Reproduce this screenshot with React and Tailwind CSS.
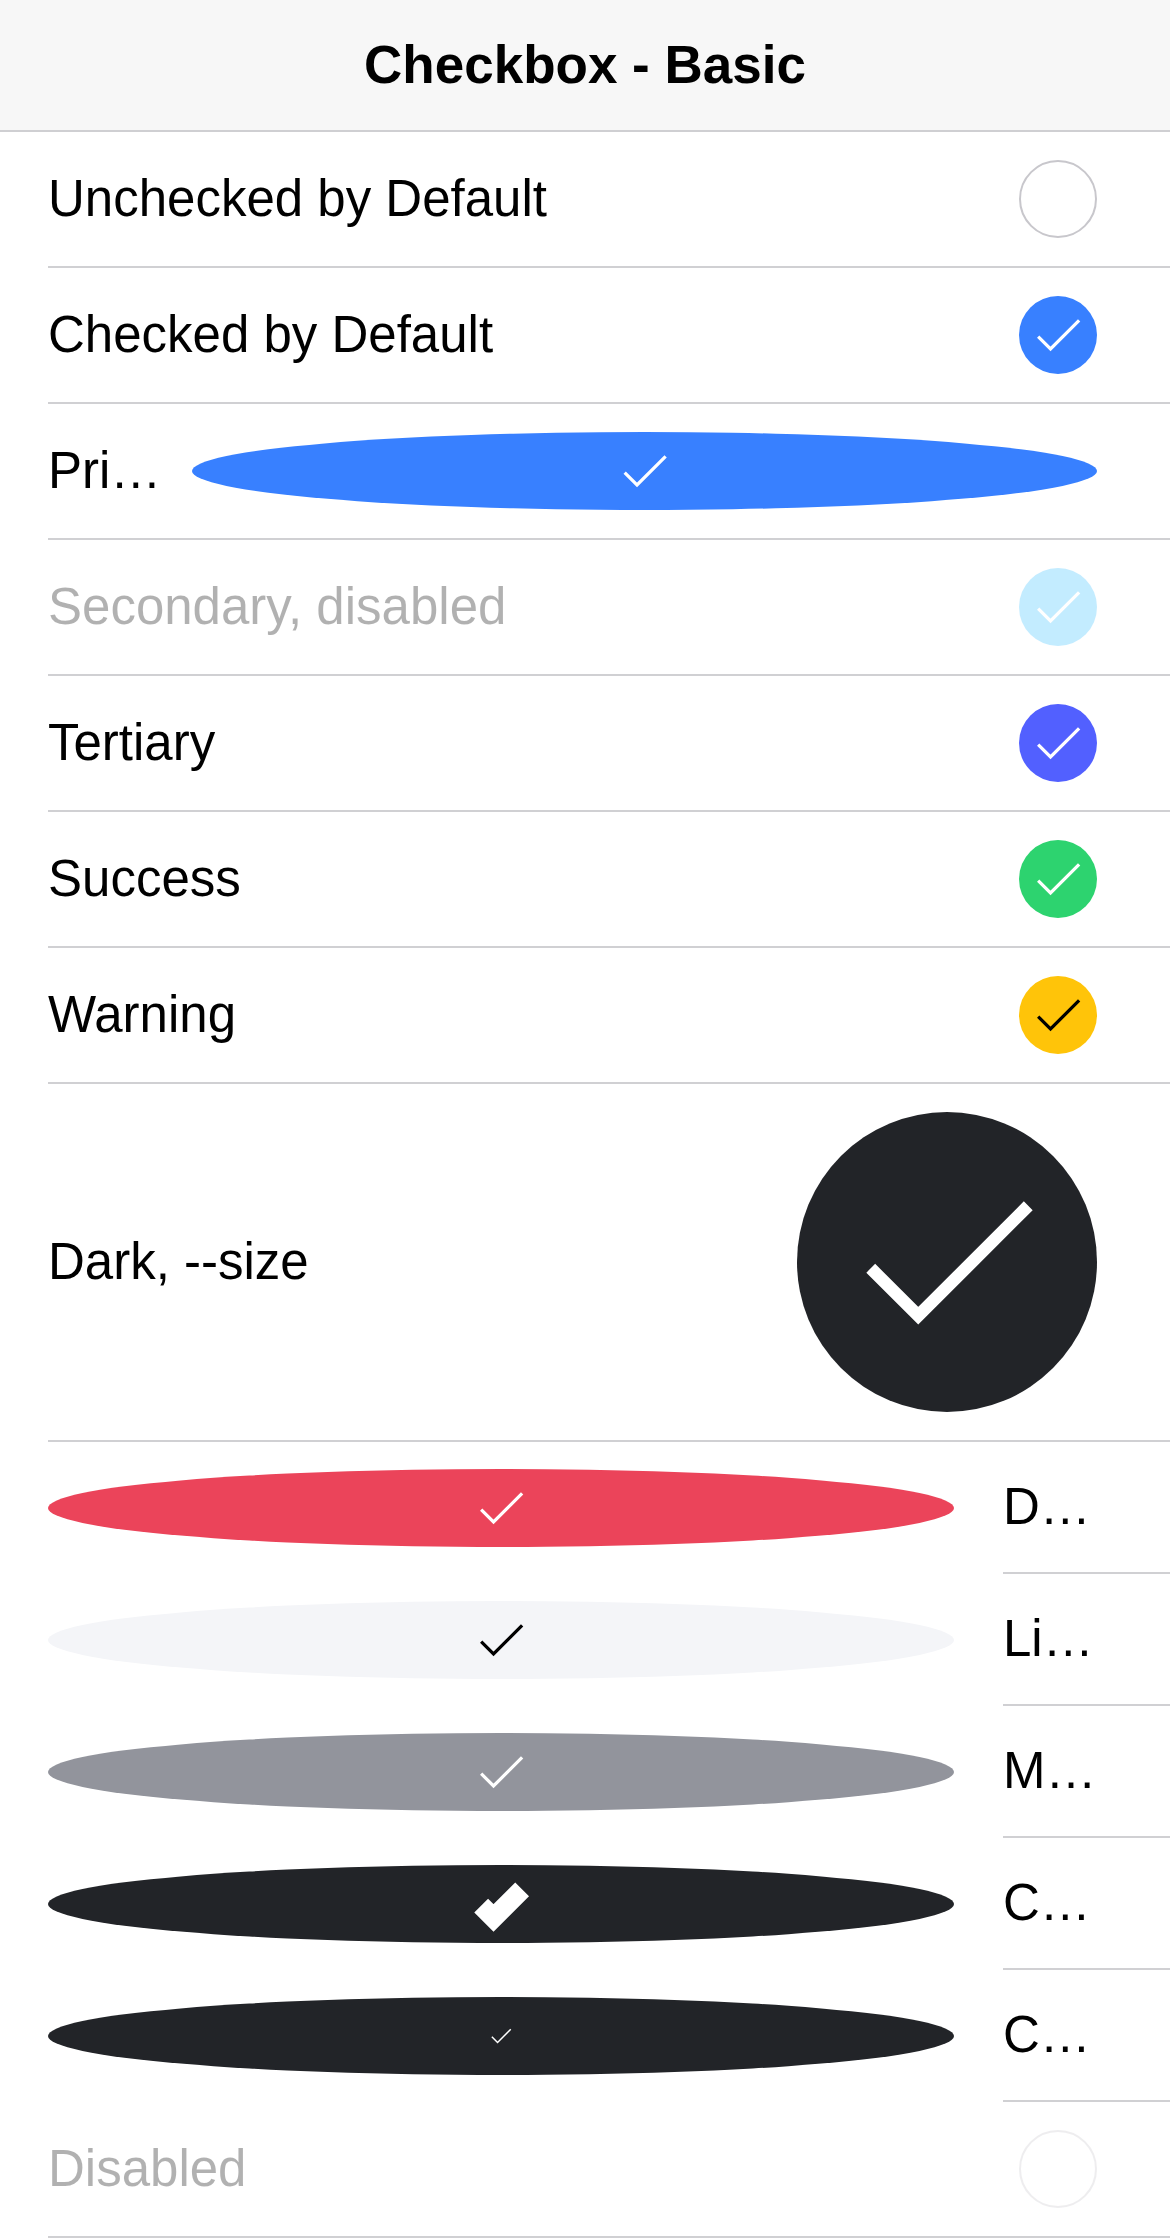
import React from 'react';

// Ionic-style iOS checkbox: filled circle (or stretched ellipse) with a stroked mark
const MARK = 'M5.9,12.5l3.8,3.8l8.8-8.8';

const Checkbox = ({ checked = true, bg, mark = '#ffffff', stroke = 1, markSize, className = '' }) => {
  if (!checked) {
    return (
      <div className={`rounded-[50%] border-[2.5px] border-[#c8c7cc] bg-white ${className}`} />
    );
  }
  return (
    <div
      className={`flex items-center justify-center rounded-[50%] ${className}`}
      style={{ backgroundColor: bg }}
    >
      <svg
        viewBox="0 0 24 24"
        className="block shrink-0"
        style={markSize ? { width: markSize, height: markSize } : { width: '100%', height: '100%' }}
      >
        <path d={MARK} fill="none" stroke={mark} strokeWidth={stroke} />
      </svg>
    </div>
  );
};

const endRows = [
  { label: 'Unchecked by Default', checked: false },
  { label: 'Checked by Default', bg: '#3880ff' },
];

const colorRows = [
  { label: 'Tertiary', bg: '#5260ff' },
  { label: 'Success', bg: '#2dd36f' },
  { label: 'Warning', bg: '#ffc409', mark: '#000000' },
];

const startRows = [
  { label: 'Danger', bg: '#eb445a' },
  { label: 'Light', bg: '#f4f5f8', mark: '#000000' },
  { label: 'Medium', bg: '#92949c' },
  { label: 'Custom checkmark width', bg: '#222428', stroke: 6 },
  { label: 'Custom checkmark size', bg: '#222428', markSize: 36 },
];

const EndRow = ({ label, children, height = 'h-[136px]', labelClass = '' }) => (
  <div className="pl-[48px]">
    <div className={`flex items-center pr-[73px] border-b-2 border-[#d0d0d3] ${height}`}>
      <span className={`flex-1 truncate ${labelClass}`}>{label}</span>
      {children}
    </div>
  </div>
);

const App = () => {
  return (
    <div
      className="w-[1170px] min-h-[2238px] bg-white text-black text-[51px] leading-tight"
      style={{ fontFamily: '"Liberation Sans", Arial, sans-serif' }}
    >
      {/* Toolbar */}
      <div className="h-[132px] flex items-center justify-center bg-[#f7f7f7] border-b-2 border-[#cfcfd2]">
        <h1 className="text-[53px] font-bold">Checkbox - Basic</h1>
      </div>

      {endRows.map((r) => (
        <EndRow key={r.label} label={r.label}>
          <Checkbox checked={r.checked !== false} bg={r.bg} className="w-[78px] h-[78px] shrink-0" />
        </EndRow>
      ))}

      {/* Primary, stretched */}
      <div className="pl-[48px]">
        <div className="flex items-center pr-[73px] h-[136px] border-b-2 border-[#d0d0d3]">
          <span className="w-[128px] mr-[16px] shrink-0 truncate">Primary</span>
          <Checkbox bg="#3880ff" className="flex-1 h-[78px]" />
        </div>
      </div>

      <EndRow label="Secondary, disabled" labelClass="opacity-30">
        <Checkbox bg="#3dc2ff" className="w-[78px] h-[78px] shrink-0 opacity-30" />
      </EndRow>

      {colorRows.map((r) => (
        <EndRow key={r.label} label={r.label}>
          <Checkbox bg={r.bg} mark={r.mark} className="w-[78px] h-[78px] shrink-0" />
        </EndRow>
      ))}

      <EndRow label="Dark, --size" height="h-[358px]">
        <Checkbox bg="#222428" className="w-[300px] h-[300px] shrink-0" />
      </EndRow>

      {/* Checkbox in the start slot, label at the end */}
      {startRows.map((r) => (
        <div key={r.label} className="flex items-center pl-[48px] h-[132px]">
          <Checkbox
            bg={r.bg}
            mark={r.mark}
            stroke={r.stroke}
            markSize={r.markSize}
            className="flex-1 h-[78px] mr-[49px]"
          />
          <div className="w-[167px] h-full flex items-center border-b-2 border-[#d0d0d3]">
            <span className="w-[100px] truncate">{r.label}</span>
          </div>
        </div>
      ))}

      <EndRow label="Disabled" labelClass="opacity-30">
        <Checkbox checked={false} className="w-[78px] h-[78px] shrink-0 opacity-30" />
      </EndRow>
    </div>
  );
};

export default App;
